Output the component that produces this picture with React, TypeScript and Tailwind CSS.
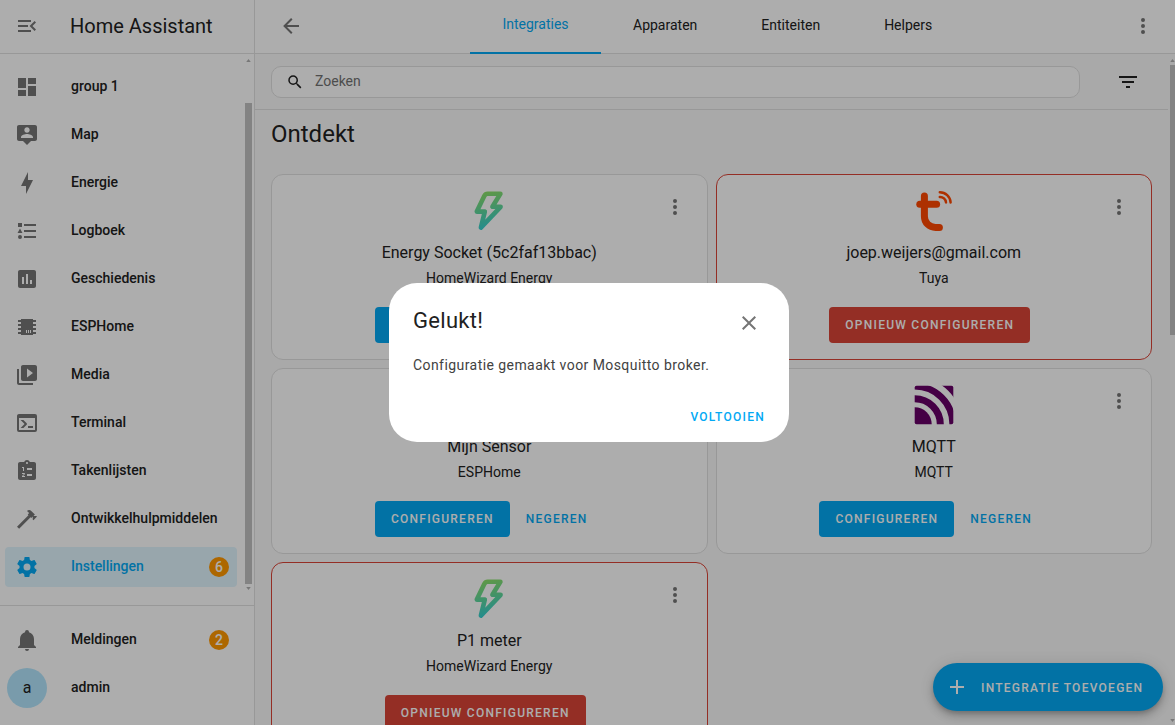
import type { ReactNode } from "react";

const icons = {
  menuOpen:
    "M21,15.61L19.59,17L14.58,12L19.59,7L21,8.39L17.44,12L21,15.61M3,6H16V8H3V6M3,13V11H13V13H3M3,18V16H16V18H3Z",
  dashboard: "M13,3V9H21V3H13M13,21H21V11H13V21M3,21H11V15H3V21M3,13H11V3H3V13Z",
  map: "M20 2H4C2.89 2 2 2.89 2 4V16C2 17.11 2.9 18 4 18H8L12 22L16 18H20C21.1 18 22 17.11 22 16V4C22 2.89 21.1 2 20 2M12 4.3C13.5 4.3 14.7 5.5 14.7 7S13.5 9.7 12 9.7 9.3 8.5 9.3 7 10.5 4.3 12 4.3M18 15H6V14.1C6 12.1 10 11 12 11S18 12.1 18 14.1V15Z",
  bolt: "M11 15H6L13 1V9H18L11 23V15Z",
  logbook:
    "M5,9.5L7.5,14H2.5L5,9.5M3,4H7V8H3V4M5,20A2,2 0 0,0 7,18A2,2 0 0,0 5,16A2,2 0 0,0 3,18A2,2 0 0,0 5,20M9,5V7H21V5H9M9,19H21V17H9V19M9,11V13H21V11H9Z",
  history:
    "M9 17H7V10H9V17M13 17H11V7H13V17M17 17H15V13H17V17M19 3H5C3.9 3 3 3.9 3 5V19C3 20.1 3.9 21 5 21H19C20.1 21 21 20.1 21 19V5C21 3.9 20.1 3 19 3Z",
  chip: "M6,4H18V5H21V7H18V9H21V11H18V13H21V15H18V17H21V19H18V20H6V19H3V17H6V15H3V13H6V11H3V9H6V7H3V5H6V4M11,15V18H12V15H11M13,15V18H14V15H13M15,15V18H16V15H15Z",
  media:
    "M4 6H2V20C2 21.1 2.9 22 4 22H18V20H4V6M20 2H8C6.9 2 6 2.9 6 4V16C6 17.1 6.9 18 8 18H20C21.1 18 22 17.1 22 16V4C22 2.9 21.1 2 20 2M12 14.5V5.5L18 10L12 14.5Z",
  console:
    "M20,19V7H4V19H20M20,3A2,2 0 0,1 22,5V19A2,2 0 0,1 20,21H4A2,2 0 0,1 2,19V5C2,3.89 2.9,3 4,3H20M13,17V15H18V17H13M9.58,13L5.57,9H8.4L11.7,12.3C12.09,12.69 12.09,13.33 11.7,13.72L8.42,17H5.59L9.58,13Z",
  todo: "M19 3H14.82C14.4 1.84 13.3 1 12 1S9.6 1.84 9.18 3H5C3.9 3 3 3.9 3 5V19C3 20.1 3.9 21 5 21H19C20.1 21 21 20.1 21 19V5C21 3.9 20.1 3 19 3M12 3C12.55 3 13 3.45 13 4S12.55 5 12 5 11 4.55 11 4 11.45 3 12 3M7 8H9V12H8V9H7V8M10 17V18H7V17.08L9 15H7V14H9.25C9.66 14 10 14.34 10 14.75C10 14.95 9.92 15.14 9.79 15.27L8.12 17H10M12 9H17V11H12V9M12 15H17V17H12V15Z",
  hammer:
    "M2,19.63L13.43,8.2L12.72,7.5L14.14,6.07L12,3.89C13.2,2.7 15.09,2.7 16.27,3.89L19.87,7.5L18.45,8.91H21.29L22,9.62L18.45,13.21L17.74,12.5V9.62L16.27,11.04L15.56,10.33L4.13,21.76L2,19.63Z",
  cog: "M12,15.5A3.5,3.5 0 0,1 8.5,12A3.5,3.5 0 0,1 12,8.5A3.5,3.5 0 0,1 15.5,12A3.5,3.5 0 0,1 12,15.5M19.43,12.97C19.47,12.65 19.5,12.33 19.5,12C19.5,11.67 19.47,11.34 19.43,11L21.54,9.37C21.73,9.22 21.78,8.95 21.66,8.73L19.66,5.27C19.54,5.05 19.27,4.96 19.05,5.05L16.56,6.05C16.04,5.66 15.5,5.32 14.87,5.07L14.5,2.42C14.46,2.18 14.25,2 14,2H10C9.75,2 9.54,2.18 9.5,2.42L9.13,5.07C8.5,5.32 7.96,5.66 7.44,6.05L4.95,5.05C4.73,4.96 4.46,5.05 4.34,5.27L2.34,8.73C2.21,8.95 2.27,9.22 2.46,9.37L4.57,11C4.53,11.34 4.5,11.67 4.5,12C4.5,12.33 4.53,12.65 4.57,12.97L2.46,14.63C2.27,14.78 2.21,15.05 2.34,15.27L4.34,18.73C4.46,18.95 4.73,19.03 4.95,18.95L7.44,17.94C7.96,18.34 8.5,18.68 9.13,18.93L9.5,21.58C9.54,21.82 9.75,22 10,22H14C14.25,22 14.46,21.82 14.5,21.58L14.87,18.93C15.5,18.67 16.04,18.34 16.56,17.94L19.05,18.95C19.27,19.03 19.54,18.95 19.66,18.73L21.66,15.27C21.78,15.05 21.73,14.78 21.54,14.63L19.43,12.97Z",
  bell: "M21,19V20H3V19L5,17V11C5,7.9 7.03,5.17 10,4.29C10,4.19 10,4.1 10,4A2,2 0 0,1 12,2A2,2 0 0,1 14,4C14,4.1 14,4.19 14,4.29C16.97,5.17 19,7.9 19,11V17L21,19M14,21A2,2 0 0,1 12,23A2,2 0 0,1 10,21",
  back: "M20,11V13H8L13.5,18.5L12.08,19.92L4.16,12L12.08,4.08L13.5,5.5L8,11H20Z",
  dots: "M12,16A2,2 0 0,1 14,18A2,2 0 0,1 12,20A2,2 0 0,1 10,18A2,2 0 0,1 12,16M12,10A2,2 0 0,1 14,12A2,2 0 0,1 12,14A2,2 0 0,1 10,12A2,2 0 0,1 12,10M12,4A2,2 0 0,1 14,6A2,2 0 0,1 12,8A2,2 0 0,1 10,6A2,2 0 0,1 12,4Z",
  search:
    "M9.5,3A6.5,6.5 0 0,1 16,9.5C16,11.11 15.41,12.59 14.44,13.73L14.71,14H15.5L20.5,19L19,20.5L14,15.5V14.71L13.73,14.44C12.59,15.41 11.11,16 9.5,16A6.5,6.5 0 0,1 3,9.5A6.5,6.5 0 0,1 9.5,3M9.5,5C7,5 5,7 5,9.5C5,12 7,14 9.5,14C12,14 14,12 14,9.5C14,7 12,5 9.5,5Z",
  filter: "M6,13H18V11H6M3,6V8H21V6M10,18H14V16H10V18Z",
  close:
    "M19,6.41L17.59,5L12,10.59L6.41,5L5,6.41L10.59,12L5,17.59L6.41,19L12,13.41L17.59,19L19,17.59L13.41,12L19,6.41Z",
  plus: "M19,13H13V19H11V13H5V11H11V5H13V11H19V13Z",
};

type IconName = keyof typeof icons;

function Icon({ name, className = "size-6" }: { name: IconName; className?: string }) {
  return (
    <svg viewBox="0 0 24 24" fill="currentColor" fillRule="evenodd" className={`block shrink-0 ${className}`}>
      <path d={icons[name]} />
    </svg>
  );
}

function HomeWizardLogo() {
  return (
    <svg viewBox="0 0 40 40" className="block size-10">
      <defs>
        <linearGradient id="hw" x1="14" y1="2" x2="22" y2="36" gradientUnits="userSpaceOnUse">
          <stop offset="0" stopColor="#8be06a" />
          <stop offset="1" stopColor="#35cfcf" />
        </linearGradient>
      </defs>
      <path
        d="M18.5 2.8H31.4L23.4 15.8H31.6L11.9 36.6L15.8 20.6H7.8L15.4 4.8Q16.5 2.8 18.5 2.8Z"
        fill="none"
        stroke="url(#hw)"
        strokeWidth="4.6"
        strokeLinejoin="round"
      />
    </svg>
  );
}

function TuyaLogo() {
  return (
    <svg viewBox="0 0 40 40" className="block size-10" fill="none" stroke="#ff4800" strokeLinecap="round">
      <path d="M10.4 5V25.2C10.4 32 15.5 36.4 21.5 36.4H25.4" strokeWidth="7" />
      <path d="M5.8 13.3H22.6" strokeWidth="7" />
      <path d="M25.8 1.3A10.8 10.8 0 0 1 36.6 11.4M25.8 5.9A6 6 0 0 1 32 11.4" strokeWidth="2.5" />
    </svg>
  );
}

function MqttLogo() {
  return (
    <svg viewBox="0 0 40 40" className="block size-10" fill="none" stroke="#660066">
      <defs>
        <clipPath id="mq">
          <rect x="0.7" y="0.7" width="38.6" height="38.6" rx="1.8" />
        </clipPath>
      </defs>
      <g clipPath="url(#mq)">
        <circle cx="0.7" cy="39.3" r="17" fill="#660066" stroke="none" />
        <circle cx="0.7" cy="39.3" r="25.6" strokeWidth="7" />
        <circle cx="0.7" cy="39.3" r="38" strokeWidth="6.6" />
        <circle cx="0.7" cy="39.3" r="52.4" strokeWidth="10" />
      </g>
    </svg>
  );
}

const navItems: { icon: IconName; label: string; badge?: number; active?: boolean }[] = [
  { icon: "dashboard", label: "group 1" },
  { icon: "map", label: "Map" },
  { icon: "bolt", label: "Energie" },
  { icon: "logbook", label: "Logboek" },
  { icon: "history", label: "Geschiedenis" },
  { icon: "chip", label: "ESPHome" },
  { icon: "media", label: "Media" },
  { icon: "console", label: "Terminal" },
  { icon: "todo", label: "Takenlijsten" },
  { icon: "hammer", label: "Ontwikkelhulpmiddelen" },
  { icon: "cog", label: "Instellingen", badge: 6, active: true },
];

function NavRow({ icon, label, badge, active }: { icon: IconName; label: string; badge?: number; active?: boolean }) {
  return (
    <div
      className={`flex h-10 w-[232px] shrink-0 items-center rounded px-2.5 text-sm font-medium ${
        active ? "bg-[#e1f5fe] text-[#03a9f4]" : "text-[#212121]"
      }`}
    >
      <span className={active ? "text-[#03a9f4]" : "text-[#757575]"}>
        <Icon name={icon} />
      </span>
      <span className="ml-8 pb-0.5 whitespace-nowrap">{label}</span>
      {badge !== undefined && <Badge value={badge} />}
    </div>
  );
}

function Badge({ value }: { value: number }) {
  return (
    <span className="-mr-0.5 ml-auto flex size-5 items-center justify-center rounded-full bg-[#ff9800] pb-px text-sm font-medium text-white">
      {value}
    </span>
  );
}

function ScrollArrow({ down = false }: { down?: boolean }) {
  return (
    <svg viewBox="0 0 6 4" className="block h-[3px] w-[5px] shrink-0" fill="#b0b0b0">
      <path d={down ? "M0 0H6L3 4Z" : "M0 4H6L3 0Z"} />
    </svg>
  );
}

function Sidebar() {
  return (
    <aside className="flex w-[255px] shrink-0 flex-col border-r border-[#e0e0e0] bg-white">
      <header className="flex h-[54px] shrink-0 items-center border-b border-[#e0e0e0] pl-[15px] text-[#757575]">
        <span className="pb-px">
          <Icon name="menuOpen" />
        </span>
        <h1 className="ml-[31px] pb-px text-xl text-[#212121]">Home Assistant</h1>
      </header>
      <div className="flex h-[551px] shrink-0">
        <nav className="flex w-[245px] flex-col gap-2 pt-[13px] pl-[5px]">
          {navItems.map((item) => (
            <NavRow key={item.label} {...item} />
          ))}
        </nav>
        <div className="flex w-[7px] flex-col items-center pt-[5px]">
          <ScrollArrow />
          <div className="mt-[41px] mb-[3px] h-[481px] w-full bg-[#c1c1c1]" />
          <ScrollArrow down />
        </div>
      </div>
      <div className="flex flex-col gap-2 border-t border-[#e0e0e0] pt-[14px] pl-[5px]">
        <NavRow icon="bell" label="Meldingen" badge={2} />
        <div className="flex h-10 items-center pl-0.5 text-sm font-medium text-[#212121]">
          <span className="flex size-10 items-center justify-center rounded-full bg-[#b3e5fc] text-base font-normal">a</span>
          <span className="ml-6 pb-0.5">admin</span>
        </div>
      </div>
    </aside>
  );
}

const cards: { name: string; domain: string; logo: ReactNode; attention?: boolean }[] = [
  { name: "Energy Socket (5c2faf13bbac)", domain: "HomeWizard Energy", logo: <HomeWizardLogo /> },
  { name: "joep.weijers@gmail.com", domain: "Tuya", logo: <TuyaLogo />, attention: true },
  { name: "Mijn Sensor", domain: "ESPHome", logo: <Icon name="chip" className="size-10" /> },
  { name: "MQTT", domain: "MQTT", logo: <MqttLogo /> },
  { name: "P1 meter", domain: "HomeWizard Energy", logo: <HomeWizardLogo />, attention: true },
];

function Card({ name, domain, logo, attention }: (typeof cards)[number]) {
  return (
    <article
      className={`relative flex h-[186px] flex-col items-center rounded-xl border bg-white pt-4 text-[#212121] ${
        attention ? "border-[#db4437]" : "border-[#e0e0e0]"
      }`}
    >
      {logo}
      <h3 className="mt-2.5 text-base leading-6">{name}</h3>
      <p className="mt-[3px] text-sm leading-5">{domain}</p>
      <div className="mt-[19px] flex text-xs font-medium tracking-[1.25px]">
        {attention ? (
          <button className="mr-2 h-9 rounded bg-[#db4437] px-4 text-white">OPNIEUW CONFIGUREREN</button>
        ) : (
          <>
            <button className="mr-2 h-9 rounded bg-[#03a9f4] px-4 text-white">CONFIGUREREN</button>
            <button className="mr-2 h-9 px-2 text-[#03a9f4]">NEGEREN</button>
          </>
        )}
      </div>
      <span className="absolute top-5 right-5 text-[#757575]">
        <Icon name="dots" />
      </span>
    </article>
  );
}

function Main() {
  return (
    <main className="flex min-w-0 grow flex-col bg-[#fafafa]">
      <header className="flex h-[54px] shrink-0 border-b border-[#e0e0e0] bg-white text-sm text-[#212121]">
        <div className="flex w-[215px] items-center pb-px pl-6 text-[#757575]">
          <Icon name="back" />
        </div>
        <div className="-mb-px flex h-[54px] items-center">
          <div className="flex h-full w-[131px] items-center justify-center border-b-2 border-[#03a9f4] pb-[5px] text-[#03a9f4]">
            Integraties
          </div>
          <div className="px-8 pb-[5px]">Apparaten</div>
          <div className="px-8 pb-[5px]">Entiteiten</div>
          <div className="px-8 pb-[5px]">Helpers</div>
        </div>
        <div className="mr-5 ml-auto flex items-center pb-px text-[#757575]">
          <Icon name="dots" />
        </div>
      </header>
      <div className="flex min-h-0 grow">
        <div className="flex w-[913px] shrink-0 flex-col overflow-hidden">
          <div className="flex h-14 shrink-0 items-center border-b border-[#e0e0e0] pl-4 text-[#212121]">
            <div className="flex h-8 w-[809px] items-center rounded-[10px] border border-[#e0e0e0] bg-white pl-3.5">
              <Icon name="search" className="size-[18px]" />
              <span className="ml-[11px] pb-0.5 text-sm text-[#727272]">Zoeken</span>
            </div>
            <span className="ml-9">
              <Icon name="filter" />
            </span>
          </div>
          <h2 className="mt-2 pl-4 text-2xl leading-8 text-[#212121]">Ontdekt</h2>
          <section className="mt-6 grid grid-cols-2 gap-2 px-4">
            {cards.map((card) => (
              <Card key={card.name} {...card} />
            ))}
          </section>
        </div>
        <div className="flex w-[7px] flex-col items-end">
          <div className="flex h-full w-[5px] flex-col items-center pt-[5px] pb-[3px]">
            <ScrollArrow />
            <div className="mt-[3px] mb-auto h-[270px] w-full bg-[#c1c1c1]" />
            <ScrollArrow down />
          </div>
        </div>
      </div>
    </main>
  );
}

export default function App() {
  return (
    <div className="relative flex h-[725px] w-[1175px] overflow-hidden bg-[#fafafa] font-[Roboto,sans-serif]">
      <Sidebar />
      <Main />
      <button className="absolute right-3 bottom-3.5 flex h-12 w-[230px] items-center gap-3 rounded-full bg-[#03a9f4] pl-3 text-xs font-medium tracking-[1.25px] whitespace-nowrap text-white shadow-[0_3px_5px_-1px_rgba(0,0,0,0.2),0_6px_10px_0_rgba(0,0,0,0.14),0_1px_18px_0_rgba(0,0,0,0.12)]">
        <Icon name="plus" />
        <span className="pt-px">INTEGRATIE TOEVOEGEN</span>
      </button>
      <div className="absolute inset-0 flex items-center justify-center bg-black/32 pl-[3px]">
        <div className="flex h-[159px] w-[400px] flex-col rounded-[28px] bg-white px-6">
          <div className="flex items-center justify-between pt-[22px]">
            <h2 className="text-[22px] leading-8 tracking-[0.3px] text-[#212121]">Gelukt!</h2>
            <span className="mt-1 mr-1 text-[#757575]">
              <Icon name="close" />
            </span>
          </div>
          <p className="mt-[18px] text-sm leading-5 tracking-[0.43px] text-[#424242]">
            Configuratie gemaakt voor Mosquitto broker.
          </p>
          <button className="mt-8 self-end text-xs leading-5 font-medium tracking-[1.25px] text-[#03a9f4]">VOLTOOIEN</button>
        </div>
      </div>
    </div>
  );
}
